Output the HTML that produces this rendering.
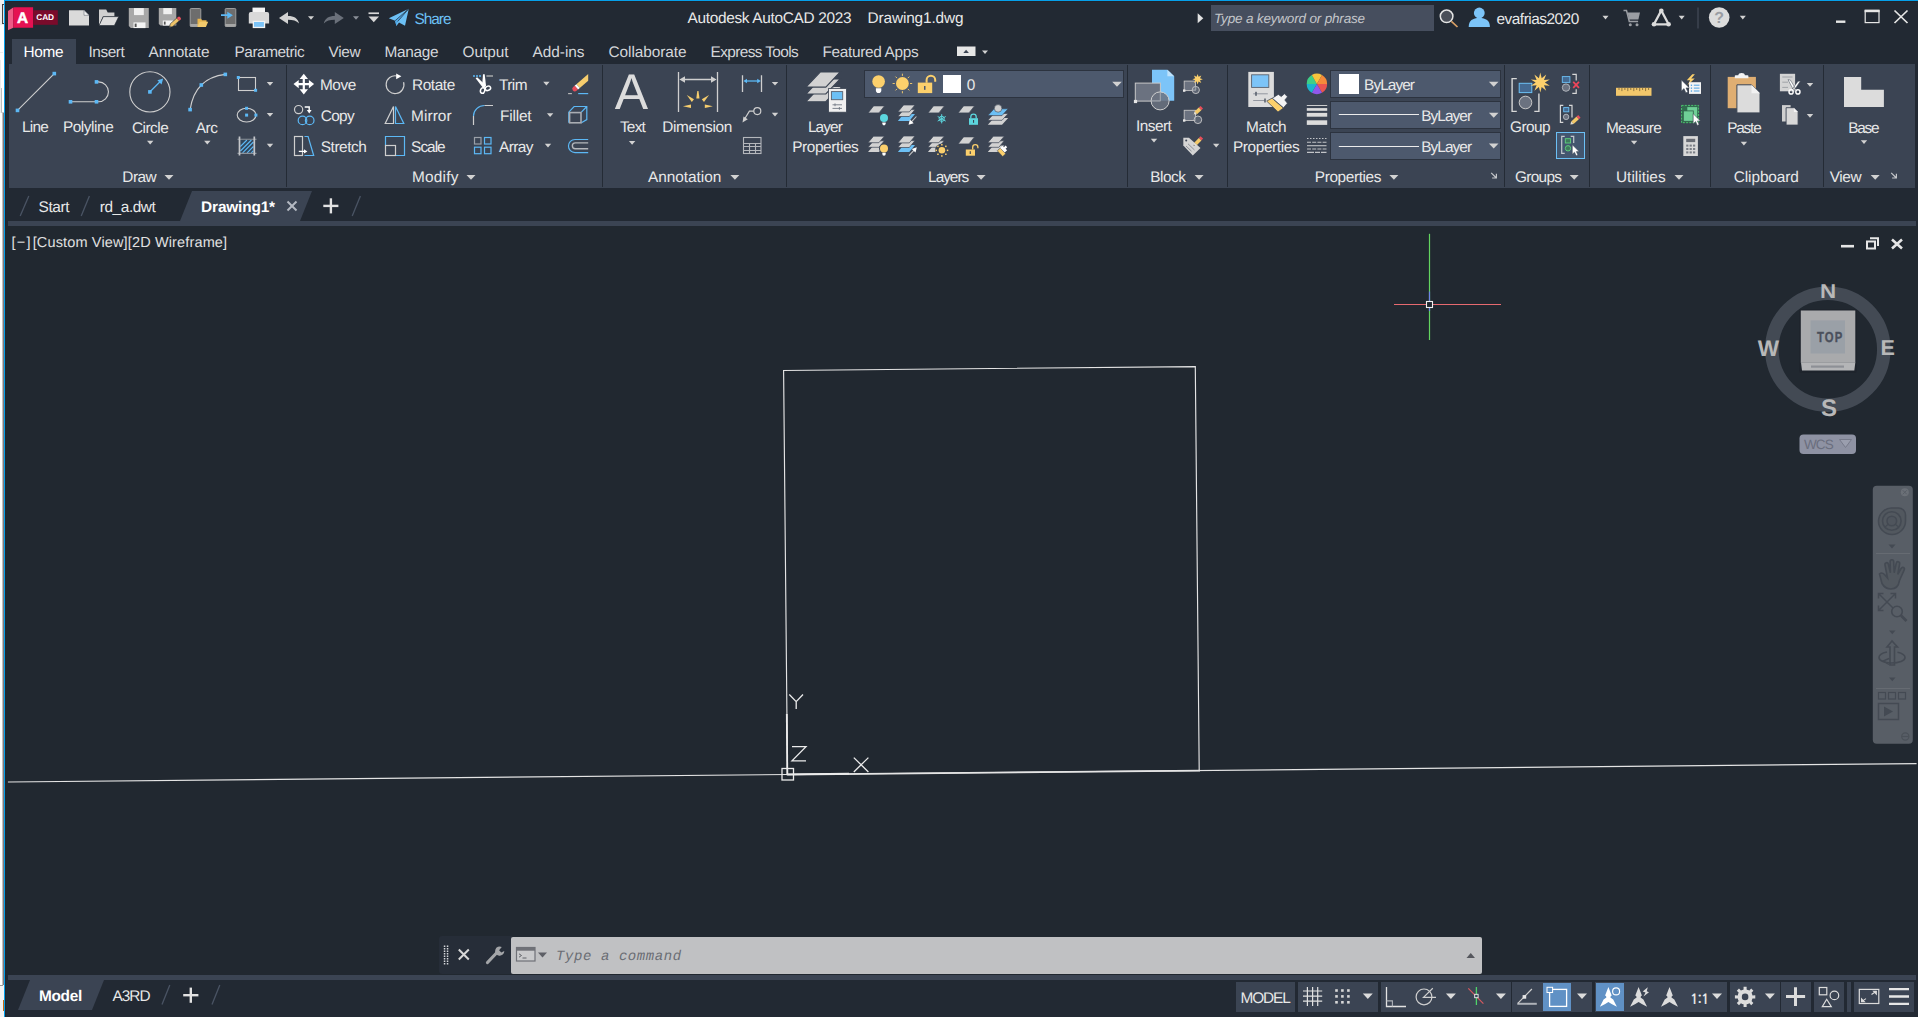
<!DOCTYPE html>
<html lang="en"><head><meta charset="utf-8"><title>Autodesk AutoCAD 2023 - Drawing1.dwg</title>
<style>
html,body{margin:0;padding:0;}
body{width:1918px;height:1017px;overflow:hidden;position:relative;background:#222933;font-family:"Liberation Sans",Arial,sans-serif;text-rendering:geometricPrecision;}
.r{position:absolute;}
.t{position:absolute;white-space:pre;line-height:1;}
svg{position:absolute;left:0;top:0;}
</style></head><body>
<div class="r" style="left:0px;top:0px;width:5px;height:1017px;background:#ffffff;"></div>
<div class="r" style="left:0px;top:0px;width:4px;height:25px;background:#f0f0f0;"></div>
<div class="r" style="left:2px;top:4px;width:2px;height:20px;background:#e2e2e2;border:1px solid #4a4444;border-right:none;box-sizing:border-box;"></div>
<div class="r" style="left:0px;top:52px;width:3px;height:1px;background:#ececec;"></div>
<div class="r" style="left:0px;top:60px;width:1px;height:53px;background:#ececec;"></div>
<div class="r" style="left:1px;top:88px;width:1px;height:25px;background:#bdbdbd;"></div>
<div class="r" style="left:1px;top:112px;width:3px;height:1px;background:#c8c8c8;"></div>
<div class="r" style="left:0px;top:113px;width:4px;height:872px;background:linear-gradient(90deg,#fff 0,#fff 45%,#8d8585 78%,#756d6d 100%);"></div>
<div class="r" style="left:0px;top:985px;width:4px;height:32px;background:#f4f4f4;"></div>
<div class="r" style="left:0px;top:985px;width:3px;height:1px;background:#9a9a9a;"></div>
<div class="r" style="left:3px;top:1000px;width:1px;height:11px;background:#c96a10;"></div>
<div class="r" style="left:4px;top:0px;width:1px;height:1017px;background:#06a0ea;"></div>
<div class="r" style="left:4px;top:0px;width:1914px;height:1px;background:#06a0ea;"></div>
<div class="r" style="left:5px;top:1px;width:1913px;height:1016px;background:#222933;"></div>
<div class="r" style="left:5px;top:1px;width:1913px;height:1px;background:#22242c;"></div>
<div class="r" style="left:5px;top:1px;width:1px;height:1016px;background:#22242c;"></div>
<div class="r" style="left:5px;top:226px;width:1913px;height:749px;background:#212830;"></div>
<div class="r" style="left:12px;top:39px;width:64px;height:26px;background:#3b4453;"></div>
<div class="r" style="left:9px;top:64px;width:1906px;height:124px;background:#3b4453;"></div>
<div class="r" style="left:8px;top:221px;width:1908px;height:5px;background:#3b4453;"></div>
<div class="r" style="left:8px;top:975px;width:1908px;height:5px;background:#3b4453;"></div>
<div class="r" style="left:1211px;top:5px;width:223px;height:26px;background:#464e5e;"></div>
<div class="r" style="left:286px;top:65px;width:1px;height:122px;background:#242b35;"></div>
<div class="r" style="left:602px;top:65px;width:1px;height:122px;background:#242b35;"></div>
<div class="r" style="left:786px;top:65px;width:1px;height:122px;background:#242b35;"></div>
<div class="r" style="left:1127px;top:65px;width:1px;height:122px;background:#242b35;"></div>
<div class="r" style="left:1227px;top:65px;width:1px;height:122px;background:#242b35;"></div>
<div class="r" style="left:1504px;top:65px;width:1px;height:122px;background:#242b35;"></div>
<div class="r" style="left:1589px;top:65px;width:1px;height:122px;background:#242b35;"></div>
<div class="r" style="left:1710px;top:65px;width:1px;height:122px;background:#242b35;"></div>
<div class="r" style="left:1823px;top:65px;width:1px;height:122px;background:#242b35;"></div>
<div class="r" style="left:864px;top:70px;width:260px;height:28px;background:#4d596d;border:1px solid #2c333f;box-sizing:border-box;"></div>
<div class="r" style="left:1330px;top:70px;width:171px;height:28px;background:#4d596d;border:1px solid #2c333f;box-sizing:border-box;"></div>
<div class="r" style="left:1330px;top:101px;width:171px;height:28px;background:#4d596d;border:1px solid #2c333f;box-sizing:border-box;"></div>
<div class="r" style="left:1330px;top:132px;width:171px;height:28px;background:#4d596d;border:1px solid #2c333f;box-sizing:border-box;"></div>
<div class="r" style="left:943px;top:75px;width:18px;height:18px;background:#ffffff;"></div>
<div class="r" style="left:1339px;top:74px;width:20px;height:20px;background:#ffffff;"></div>
<div class="r" style="left:1556px;top:132px;width:29px;height:27px;background:#43566f;border:1px solid #6cc0f5;box-sizing:border-box;"></div>
<div class="r" style="left:1236px;top:982px;width:59px;height:30px;background:#3b4453;"></div>
<div class="r" style="left:1298px;top:982px;width:80px;height:30px;background:#3b4453;"></div>
<div class="r" style="left:1381px;top:982px;width:130px;height:30px;background:#3b4453;"></div>
<div class="r" style="left:1512px;top:982px;width:80px;height:30px;background:#3b4453;"></div>
<div class="r" style="left:1595px;top:982px;width:132px;height:30px;background:#3b4453;"></div>
<div class="r" style="left:1730px;top:982px;width:50px;height:30px;background:#3b4453;"></div>
<div class="r" style="left:1781px;top:982px;width:30px;height:30px;background:#3b4453;"></div>
<div class="r" style="left:1814px;top:982px;width:30px;height:30px;background:#3b4453;"></div>
<div class="r" style="left:1847px;top:982px;width:4px;height:30px;background:#3b4453;"></div>
<div class="r" style="left:1854px;top:982px;width:60px;height:30px;background:#3b4453;"></div>
<div class="r" style="left:1543px;top:983px;width:28px;height:28px;background:#6091c5;"></div>
<div class="r" style="left:1596px;top:983px;width:28px;height:28px;background:#6091c5;"></div>
<div class="r" style="left:439px;top:936px;width:73px;height:38px;background:#262d38;border-radius:3px 0 0 3px;"></div>
<div class="r" style="left:511px;top:937px;width:971px;height:37px;background:#c0c1c3;border-radius:2px;"></div>
<svg width="1918" height="1017" viewBox="0 0 1918 1017">
<!-- ic_canvas -->
<!-- file tabs -->
<polygon points="192,191 312,191 300,221 180,221" fill="#3b4453"/>
<g stroke="#4a5464" stroke-width="1.3" fill="none">
<line x1="20.2" y1="216" x2="28.8" y2="196"/>
<line x1="81.2" y1="216" x2="89.4" y2="196"/>
<line x1="352.2" y1="216" x2="360.4" y2="196"/>
</g>
<g stroke="#b4b9c2" stroke-width="2" fill="none"><line x1="287.5" y1="201.5" x2="296.5" y2="210.5"/><line x1="296.5" y1="201.5" x2="287.5" y2="210.5"/></g>
<g stroke="#e2e2e2" stroke-width="2.4" fill="none"><line x1="323.3" y1="205.9" x2="338.4" y2="205.9"/><line x1="330.9" y1="198.3" x2="330.9" y2="213.4"/></g>

<!-- layout tabs -->
<polygon points="30,980 104,980 92,1010 18,1010" fill="#3b4453"/>
<g stroke="#4a5464" stroke-width="1.3" fill="none">
<line x1="162" y1="1004.5" x2="169.8" y2="985"/>
<line x1="212" y1="1004.5" x2="219.8" y2="985"/>
</g>
<g stroke="#e2e2e2" stroke-width="2.4" fill="none"><line x1="183.2" y1="995.2" x2="198.4" y2="995.2"/><line x1="190.8" y1="987.6" x2="190.8" y2="1002.8"/></g>

<!-- drawing -->
<g stroke="#e4e4e4" stroke-width="1.15" fill="none" stroke-linecap="square">
<line x1="8.5" y1="782" x2="1916" y2="763.6"/>
<polyline points="787.5,774.5 783.6,370.5 1195.3,366.6 1199.2,770.5"/>
<line x1="787.5" y1="774.6" x2="1199.2" y2="770.6" stroke-width="1.6"/>
</g>
<!-- UCS icon -->
<g stroke="#ececec" fill="none" stroke-width="1.3">
<line x1="787.3" y1="774" x2="786.8" y2="714" stroke-width="1.8"/>
<line x1="787.5" y1="774.3" x2="849" y2="773.7" stroke-width="1.8"/>
<rect x="782" y="768.5" width="11.5" height="11.5"/>
<path d="M789.3 694.5 L796.2 701.6 L803 694.5 M796.2 701.6 V709"/>
<path d="M792 746.6 H806 L792 760.8 H806"/>
<path d="M853.8 757.6 L868.4 772 M868.4 757.6 L853.8 772"/>
</g>
<!-- crosshair -->
<g fill="none" stroke-width="1.2">
<line x1="1429.5" y1="233.8" x2="1429.5" y2="340" stroke="#63d45f"/>
<line x1="1429.5" y1="291.5" x2="1429.5" y2="311" stroke="#6e83e6"/>
<line x1="1394" y1="304.5" x2="1501" y2="304.5" stroke="#e66a70"/>
<rect x="1426.5" y="301.5" width="6" height="6" fill="#212830" stroke="#f0f0f0" stroke-width="1.1"/>
</g>
<!-- viewport controls -->
<g fill="none" stroke="#e6e6e6">
<line x1="1841" y1="246.2" x2="1854" y2="246.2" stroke-width="2.6"/>
<rect x="1867" y="241.5" width="8" height="7" stroke-width="2"/>
<path d="M1870 238.2 H1878 V246" stroke-width="2"/>
<path d="M1892 239.5 L1902 248.5 M1902 239.5 L1892 248.5" stroke-width="2.6"/>
</g>
<!-- viewcube -->
<circle cx="1827.8" cy="349.2" r="56" fill="none" stroke="#434a54" stroke-width="13.5"/>
<rect x="1799" y="309" width="58" height="64" rx="3" fill="#1c222a" opacity="0.6"/>
<polygon points="1801,362.6 1855.3,362.6 1854.3,370.5 1802,370.5" fill="#b4b5b7"/>
<rect x="1800.8" y="310.5" width="54.5" height="52.3" fill="#a9aaac"/>
<rect x="1810.6" y="320.4" width="34.4" height="33.1" fill="#9aa0a7"/>
<rect x="1811" y="365.5" width="33" height="2.2" fill="#8d9096"/>
<!-- WCS -->
<rect x="1799.5" y="434.5" width="56.5" height="19.5" rx="4" fill="#8e92a3"/>
<path d="M1839.5 439.5 H1851.5 L1845.5 447.5 Z" fill="#9a9eae" stroke="#767a8a" stroke-width="1"/>
<!-- navigation bar -->
<rect x="1872.8" y="485.7" width="40" height="258" rx="4" fill="#585e66"/>
<g fill="none" stroke="#444a53" stroke-width="1.6">
<circle cx="1904.8" cy="492.3" r="4" stroke="none" fill="#6b7077"/><path d="M1902.8 490.3 l4 4 m0 -4 l-4 4" stroke-width="1" stroke="#585e66"/>
<circle cx="1905.3" cy="736.5" r="3.6" stroke-width="1.2" stroke="#4b5159"/><path d="M1902 736.5 h6.5" stroke-width="1.2" stroke="#4b5159"/>
<line x1="1876" y1="553.5" x2="1910" y2="553.5" stroke-width="1" stroke="#666b72"/>
<line x1="1876" y1="688.5" x2="1910" y2="688.5" stroke-width="1" stroke="#666b72"/>
<!-- steering wheel -->
<path d="M1891.5 508 h7 a7 7 0 0 1 7 7 v6 a13.5 13.5 0 0 1 -27 0 a13.5 13.5 0 0 1 13 -13 z" fill="#52585f"/>
<circle cx="1891.8" cy="521" r="9.3"/><circle cx="1891.8" cy="521" r="4.8" fill="#4f555d"/>
<path d="M1885 527 l3.5 -3 M1898.5 527 l-3.5 -3" stroke-width="1.2"/>
<!-- pan hand -->
<path d="M1879.500 574 c1.500 -1.500 3.500 -1 5 0.500 l3 3.500 l-2.500 -13 c-0.500 -2.600 2.800 -3.300 3.400 -0.700 l2 8.500 l-0.300 -11 c0 -2.700 3.600 -2.700 3.600 0 l0.500 11 l2 -9.500 c0.600 -2.600 3.900 -1.900 3.400 0.700 l-1.800 10.300 l3.300 -5.800 c1.300 -2.300 4.200 -0.700 3 1.600 l-4.600 10.400 c-0.800 5 -3.500 8.500 -8.500 8.500 c-4.500 0 -7 -2 -9 -5.500 z" fill="#52585f"/>
<!-- zoom extents -->
<path d="M1878.500 593.500 l17 17 M1895.500 593.500 l-17 17 M1878.500 598.500 v-5 h5 M1890.500 593.500 h5 v5 M1878.500 605.500 v5 h5" stroke-width="1.5"/>
<circle cx="1897" cy="611.500" r="5.300" fill="#585e66"/>
<line x1="1901" y1="615.500" x2="1906.500" y2="621" stroke-width="2.6"/>
<!-- orbit -->
<path d="M1892 641 l-5 6 h3 v18 h4.500 v-18 h3 z"/>
<path d="M1887 652 c-5 1 -8 3 -8 5.500 c0 3.500 6 5.500 12.500 5.500 c7.500 0 13.500 -2.300 13.500 -5.500 c0 -2.300 -3 -4.300 -7.500 -5.300"/>
<path d="M1889 658.500 l-6 2.500 l6 3.500" stroke-width="1.4"/>
<!-- showmotion -->
<rect x="1878.500" y="692.500" width="7" height="6.500" stroke-width="1.2"/><rect x="1888.500" y="692.500" width="7" height="6.500" stroke-width="1.2"/><rect x="1898.500" y="692.500" width="7" height="6.500" stroke-width="1.2"/>
<rect x="1878.500" y="703.500" width="20" height="16" stroke-width="1.5"/>
</g>
<g fill="#444a53">
<path d="M1888.500 544.500 h7 l-3.500 4 z"/><path d="M1889 630.500 h6.500 l-3.250 3.800 z"/><path d="M1889 677.500 h6.500 l-3.250 3.800 z"/>
<path d="M1884 706.500 v10 l9 -5 z"/>
</g>
<!-- command line icons -->
<g fill="#d4d6da">
<rect x="443.800" y="945.500" width="1.500" height="1.500"/><rect x="446.800" y="945.500" width="1.500" height="1.500"/>
<rect x="443.800" y="948" width="1.500" height="1.500"/><rect x="446.800" y="948" width="1.500" height="1.500"/>
<rect x="443.800" y="950.500" width="1.500" height="1.500"/><rect x="446.800" y="950.500" width="1.500" height="1.500"/>
<rect x="443.800" y="953" width="1.500" height="1.500"/><rect x="446.800" y="953" width="1.500" height="1.500"/>
<rect x="443.800" y="955.500" width="1.500" height="1.500"/><rect x="446.800" y="955.500" width="1.500" height="1.500"/>
<rect x="443.800" y="958" width="1.500" height="1.500"/><rect x="446.800" y="958" width="1.500" height="1.500"/>
<rect x="443.800" y="960.500" width="1.500" height="1.500"/><rect x="446.800" y="960.500" width="1.500" height="1.500"/>
<rect x="443.800" y="963" width="1.500" height="1.500"/><rect x="446.800" y="963" width="1.500" height="1.500"/>
</g>
<path d="M458.800 949.500 l10 10 m0 -10 l-10 10" stroke="#d8d8d8" stroke-width="2" fill="none"/>
<path d="M487.500 962.500 l9 -9.500" stroke="#a3a5a8" stroke-width="3.200" stroke-linecap="round" fill="none"/>
<path d="M501.800 947 a4.600 4.600 0 1 0 2.500 4 l-3 1.500 l-2.200 -2.200 z" fill="#a3a5a8"/>
<rect x="516.500" y="947.500" width="18.500" height="13.500" fill="#c9cacc" stroke="#6f7177" stroke-width="1.200"/>
<rect x="516.500" y="947.500" width="18.500" height="3.200" fill="#6f7177"/>
<path d="M519 953.800 l2.500 1.700 l-2.500 1.700 M522.500 958 h4" stroke="#55575d" stroke-width="0.900" fill="none"/>
<path d="M538 952.500 h9 l-4.500 5 z" fill="#5d5f66"/>
<path d="M1466.500 958 h8.500 l-4.250 -5 z" fill="#55575d"/>
<!-- ic_title -->
<!-- logo -->
<polygon points="8,11 13.2,7.600 13.2,27.800 8,30.300" fill="#ee5a86"/>
<path d="M13.2 8.200 q0 -1 1 -1 h18.900 v20.600 h-19.900 z" fill="#e51152"/>
<rect x="33.100" y="10.200" width="24.700" height="14.600" fill="#7a0b2b"/>
<!-- new -->
<path d="M69 10.300 h15 l5 5 v10.300 h-20 z" fill="#dadada"/>
<path d="M84 10.300 v5 h5 z" fill="#f4f4f4" stroke="#6a6f78" stroke-width="0.600"/>
<!-- open -->
<path d="M99 9.400 h7.200 l1.500 3.100 h6.700 v4 h-11.500 l-3.900 9 z" fill="#d0d0d0"/>
<path d="M103.300 16.600 h15.500 l-4.400 9 h-15.400 z" fill="#dcdcdc" stroke="#222933" stroke-width="0.700"/>
<!-- save -->
<path d="M128.800 8.100 h20 v20 h-18 l-2 -2 z" fill="#a8a8a8"/>
<rect x="134" y="8.100" width="9.800" height="7" fill="#f0f0f0"/>
<rect x="133.500" y="22.400" width="12" height="5.700" fill="#f4f4f4"/>
<rect x="134.700" y="23.600" width="1.900" height="3.400" fill="#555"/>
<!-- save as -->
<path d="M158.800 8.100 h17.500 v17.500 h-15.800 l-1.700 -1.700 z" fill="#a8a8a8"/>
<rect x="163.300" y="8.100" width="8.600" height="6.100" fill="#f0f0f0"/>
<rect x="162.800" y="20.500" width="10.500" height="5.100" fill="#f4f4f4"/>
<rect x="163.900" y="21.600" width="1.700" height="3" fill="#555"/>
<path d="M169.300 27.600 l1 -3.800 l6.500 -5.800 l2.500 2.700 l-6.500 5.800 z" fill="#f0c56a" stroke="#222933" stroke-width="0.600"/>
<path d="M176.800 18 l1.300 -1.100 q1 -0.800 1.900 0.200 l0.700 0.800 q0.800 1 -0.200 1.800 l-1.200 1 z" fill="#e9525e"/>
<path d="M169.300 27.600 l0.500 -1.900 l1.400 1.400 z" fill="#555"/>
<!-- open from web/mobile -->
<rect x="190.200" y="8.500" width="10.600" height="18" rx="1" fill="#6d6d6d" stroke="#a6a6a6" stroke-width="0.900"/>
<rect x="190.200" y="24" width="10.600" height="2.500" fill="#a6a6a6"/>
<path d="M197.500 18.800 h3.600 l0.900 1.500 h4.500 v1.700 h-7 l-2 4.900 z" fill="#e9b64f"/>
<path d="M199.400 21.700 h8.800 l-2.300 5.200 h-8.400 z" fill="#f3ca6c"/>
<!-- save to web/mobile -->
<rect x="225.200" y="8.500" width="10.600" height="18" rx="1" fill="#6d6d6d" stroke="#a6a6a6" stroke-width="0.900"/>
<rect x="225.200" y="24" width="10.600" height="2.500" fill="#a6a6a6"/>
<path d="M221 14.300 h6.300 v-2.600 l5.600 3.500 l-5.600 3.500 v-2.600 h-6.300 z" fill="#5cb8f5"/>
<!-- print -->
<rect x="252.500" y="7.600" width="12.500" height="6" fill="#f4f4f4"/>
<path d="M250.800 12 h16.300 q2 0 2 2 v9.600 h-20.300 v-9.600 q0 -2 2 -2 z" fill="#d9d9d9"/>
<rect x="252.700" y="20.800" width="12.500" height="7.300" fill="#f4f4f4"/>
<rect x="254" y="22" width="9.900" height="4.800" fill="#7cc4f8"/>
<!-- undo -->
<path d="M279 17.900 l9 -6 v4.200 c6 0 10 2.500 11 7.400 c-2.500 -3 -6 -3.800 -11 -3.800 v4.200 z" fill="#d2d2d2"/>
<path d="M308 16.200 h6 l-3 3.600 z" fill="#d2d2d2"/>
<!-- redo -->
<path d="M343.800 17.900 l-9 -6 v4.200 c-6 0 -10 2.500 -11 7.400 c2.500 -3 6 -3.800 11 -3.800 v4.200 z" fill="#6a707a"/>
<path d="M353 16.200 h6 l-3 3.600 z" fill="#8a8f98"/>
<!-- customize -->
<rect x="368.500" y="12.400" width="10.500" height="1.700" fill="#d8d8d8"/>
<path d="M368.500 16.600 h10.500 l-5.250 5.600 z" fill="#d8d8d8"/>
<!-- share -->
<path d="M388.800 18.200 l20 -9.500 l-3.800 17 l-6 -3.300 l-2.600 3.600 l-1.300 -5.300 z" fill="#6cc0f5"/>
<path d="M408.800 8.700 l-13.700 12 l1.300 5.300 l1.300 -4.500 z" fill="#4ea6e6"/>
<path d="M408.800 8.700 l-13.700 12" stroke="#222933" stroke-width="0.700" fill="none"/>
<path d="M408.800 8.700 l-11.100 12.800" stroke="#222933" stroke-width="0.700" fill="none"/>

<!-- right side -->
<path d="M1197.700 13.300 v9.900 l5.600 -4.950 z" fill="#e2e2e2"/>
<circle cx="1446.600" cy="16.300" r="6.300" fill="#4a4f59" stroke="#e4e4e4" stroke-width="1.500"/>
<line x1="1451.400" y1="21.300" x2="1457.500" y2="27" stroke="#d9a066" stroke-width="1.700"/>
<circle cx="1479.300" cy="13" r="5.400" fill="#7cc4f8"/>
<path d="M1468.700 27 c0 -6.500 4 -9 10.600 -9 s10.600 2.500 10.600 9 z" fill="#7cc4f8"/>
<path d="M1602.500 15.800 h6 l-3 3.600 z" fill="#d2d2d2"/>
<!-- cart -->
<g fill="none" stroke="#9a9da3" stroke-width="1.500"><path d="M1623.500 10.500 h3 l2.800 11 h8.800"/></g>
<path d="M1627.500 12.500 h12.500 l-1.600 7 h-9.200 z" fill="#9a9da3"/>
<circle cx="1630.300" cy="24.700" r="1.500" fill="#9a9da3"/><circle cx="1637" cy="24.700" r="1.500" fill="#9a9da3"/>
<!-- autodesk app -->
<path d="M1661.300 10.500 l-7.300 13.800 h14.600 z" fill="none" stroke="#dcdcdc" stroke-width="2.300" stroke-linejoin="round"/>
<circle cx="1661.300" cy="10.800" r="2.300" fill="#dcdcdc"/><circle cx="1654" cy="24.300" r="2.300" fill="#dcdcdc"/><circle cx="1668.600" cy="24.300" r="2.300" fill="#dcdcdc"/>
<path d="M1678.700 15.800 h6 l-3 3.600 z" fill="#d2d2d2"/>
<rect x="1697.500" y="7.500" width="1" height="21" fill="#4a5260"/>
<circle cx="1719.200" cy="17.500" r="10.300" fill="#dcdcdc"/>
<path d="M1739.800 15.800 h6 l-3 3.600 z" fill="#d2d2d2"/>
<!-- window buttons -->
<rect x="1836" y="20.500" width="9.400" height="2.400" fill="#e6e6e6"/>
<rect x="1865.200" y="10.800" width="13.800" height="11.800" fill="none" stroke="#e6e6e6" stroke-width="1.200"/>
<rect x="1864.600" y="9.600" width="15" height="2.600" fill="#e6e6e6"/>
<path d="M1894.500 10.500 l13 12.500 m0 -12.500 l-13 12.500" stroke="#e6e6e6" stroke-width="1.700" fill="none"/>
<!-- ribbon minimize button -->
<rect x="957" y="46.500" width="18.500" height="9.500" fill="#e6e6e6"/>
<path d="M963.300 53 h5.600 l-2.800 -3.300 z" fill="#3b4453"/>
<path d="M982 50.500 h6 l-3 3.400 z" fill="#d2d2d2"/>
<!-- ic_ribbon1 -->
<path d="M266.8 82.0 h6.4 l-3.20 3.7 z" fill="#d2d2d2"/>
<path d="M266.8 113.0 h6.4 l-3.20 3.7 z" fill="#d2d2d2"/>
<path d="M266.8 143.8 h6.4 l-3.20 3.7 z" fill="#d2d2d2"/>
<path d="M147.0 140.8 h6.4 l-3.20 3.7 z" fill="#d2d2d2"/>
<path d="M204.1 140.8 h6.4 l-3.20 3.7 z" fill="#d2d2d2"/>
<path d="M543.2 81.8 h6.4 l-3.20 3.7 z" fill="#d2d2d2"/>
<path d="M546.9 113.2 h6.4 l-3.20 3.7 z" fill="#d2d2d2"/>
<path d="M544.8 143.7 h6.4 l-3.20 3.7 z" fill="#d2d2d2"/>
<path d="M628.9 141.0 h6.4 l-3.20 3.7 z" fill="#d2d2d2"/>
<path d="M771.8 81.9 h6.4 l-3.20 3.7 z" fill="#d2d2d2"/>
<path d="M771.8 112.8 h6.4 l-3.20 3.7 z" fill="#d2d2d2"/>
<path d="M1150.8 138.7 h6.4 l-3.20 3.7 z" fill="#d2d2d2"/>
<path d="M1213.0 143.8 h6.4 l-3.20 3.7 z" fill="#d2d2d2"/>
<path d="M1630.9 140.7 h6.4 l-3.20 3.7 z" fill="#d2d2d2"/>
<path d="M1740.7 141.8 h6.4 l-3.20 3.7 z" fill="#d2d2d2"/>
<path d="M1806.8 83.0 h6.4 l-3.20 3.7 z" fill="#d2d2d2"/>
<path d="M1806.8 114.0 h6.4 l-3.20 3.7 z" fill="#d2d2d2"/>
<path d="M1860.8 140.2 h6.4 l-3.20 3.7 z" fill="#d2d2d2"/>
<path d="M164.5 175.0 h9.0 l-4.50 4.8 z" fill="#d2d2d2"/>
<path d="M466.5 175.0 h9.0 l-4.50 4.8 z" fill="#d2d2d2"/>
<path d="M730.4 175.0 h9.0 l-4.50 4.8 z" fill="#d2d2d2"/>
<path d="M976.6 175.0 h9.0 l-4.50 4.8 z" fill="#d2d2d2"/>
<path d="M1194.6 175.0 h9.0 l-4.50 4.8 z" fill="#d2d2d2"/>
<path d="M1389.4 175.0 h9.0 l-4.50 4.8 z" fill="#d2d2d2"/>
<path d="M1569.7 175.0 h9.0 l-4.50 4.8 z" fill="#d2d2d2"/>
<path d="M1674.5 175.0 h9.0 l-4.50 4.8 z" fill="#d2d2d2"/>
<path d="M1870.7 175.0 h9.0 l-4.50 4.8 z" fill="#d2d2d2"/>
<path d="M1112.2 81.8 h9.6 l-4.80 5.0 z" fill="#d2d2d2"/>
<path d="M1488.9 81.8 h9.6 l-4.80 5.0 z" fill="#d2d2d2"/>
<path d="M1488.9 112.7 h9.6 l-4.80 5.0 z" fill="#d2d2d2"/>
<path d="M1488.9 143.6 h9.6 l-4.80 5.0 z" fill="#d2d2d2"/>
<path d="M1491.2 172.8 l5.2 5.2 m0 -4.3 v4.3 h-4.3" stroke="#c4c6ca" stroke-width="1.2" fill="none"/>
<path d="M1891.2 172.8 l5.2 5.2 m0 -4.3 v4.3 h-4.3" stroke="#c4c6ca" stroke-width="1.2" fill="none"/>
<g fill="none" stroke="#cfcfcf" stroke-width="1.100">
<line x1="17.5" y1="110.4" x2="54.3" y2="73.6"/>
<path d="M70.5 101.8 H98.500 a9.950 9.950 0 0 0 0 -19.900 H96.500"/>
<circle cx="149.9" cy="91.9" r="20.1"/>
<path d="M190.1 109.6 Q194.900 78 225.3 74.4"/>
<rect x="238.500" y="77.500" width="17" height="13"/>
<ellipse cx="246.600" cy="115.100" rx="9.400" ry="6.900"/>
</g>
<path d="M150.5 91.3 L160.5 81.3" stroke="#5cb8f5" stroke-width="1.3" fill="none"/>
<path d="M163.200 78.600 l-5.800 1.700 l4.100 4.100 z" fill="#5cb8f5"/>
<rect x="15.7" y="108.6" width="3.6" height="3.6" fill="#5cb8f5"/>
<rect x="52.5" y="71.8" width="3.6" height="3.6" fill="#5cb8f5"/>
<rect x="68.7" y="100.0" width="3.6" height="3.6" fill="#5cb8f5"/>
<rect x="94.7" y="100.0" width="3.6" height="3.6" fill="#5cb8f5"/>
<rect x="94.7" y="80.1" width="3.6" height="3.6" fill="#5cb8f5"/>
<rect x="148.1" y="90.1" width="3.6" height="3.6" fill="#5cb8f5"/>
<rect x="188.3" y="107.8" width="3.6" height="3.6" fill="#5cb8f5"/>
<rect x="199.5" y="83.2" width="3.6" height="3.6" fill="#5cb8f5"/>
<rect x="223.5" y="72.6" width="3.6" height="3.6" fill="#5cb8f5"/>
<rect x="236.8" y="76.0" width="3.0" height="3.0" fill="#5cb8f5"/>
<rect x="254.1" y="88.8" width="3.0" height="3.0" fill="#5cb8f5"/>
<rect x="245.1" y="106.8" width="3.0" height="3.0" fill="#5cb8f5"/>
<rect x="245.1" y="113.6" width="3.0" height="3.0" fill="#5cb8f5"/>
<rect x="254.4" y="113.6" width="3.0" height="3.0" fill="#5cb8f5"/>
<rect x="240.300" y="140" width="13.200" height="12.800" fill="#31465c"/>
<path d="M240.400 146.500 l6.500 -6.500 M240.400 151 l11 -11 M242.600 152.800 l10.800 -10.800 M247.100 152.800 l6.300 -6.300 M251.300 152.800 l2.100 -2.100" stroke="#5cb8f5" stroke-width="1.100" fill="none"/>
<g fill="none"><path d="M237.500 139.200 H256.500 M237.500 153.400 H256.500" stroke="#8c929b" stroke-width="1.100"/><path d="M239.500 136.600 V155.600 M254.300 136.600 V155.600" stroke="#c4c6ca" stroke-width="1.700"/></g>
<g fill="#ffffff"><path d="M303.800 73.800 l4.200 5.200 h-3.100 v4 h4 v-3.100 l5.200 4.200 l-5.200 4.200 v-3.100 h-4 v4 h3.100 l-4.200 5.200 l-4.200 -5.200 h3.100 v-4 h-4 v3.100 l-5.200 -4.200 l5.200 -4.200 v3.100 h4 v-4 h-3.100 z"/></g>
<circle cx="298.600" cy="109.600" r="4.100" fill="none" stroke="#cfcfcf" stroke-width="1.200"/>
<path d="M304.700 107 h4.500 v3.500" fill="none" stroke="#ffffff" stroke-width="1.400"/><path d="M306.800 110 h4.800 l-2.400 3.600 z" fill="#ffffff"/>
<g fill="none" stroke="#5cb8f5" stroke-width="1.200"><circle cx="302.500" cy="120.400" r="4.300"/><circle cx="309.700" cy="120.400" r="4.300"/></g>
<rect x="294.500" y="136.500" width="8" height="19" fill="none" stroke="#cfcfcf" stroke-width="1.200"/>
<path d="M304.500 136.500 h3.600 l5.600 19 h-9.200" fill="none" stroke="#5cb8f5" stroke-width="1.200"/>
<path d="M298.800 151.400 h5.500" stroke="#ffffff" stroke-width="1.300" fill="none"/><path d="M304 149.200 l3.400 2.200 l-3.400 2.200 z" fill="#ffffff"/>
<path d="M397 76 A8.900 8.900 0 1 0 403.600 82.200" fill="none" stroke="#cfcfcf" stroke-width="1.200"/>
<path d="M396.200 73.500 l5.200 2.700 l-5.200 3 z" fill="#ffffff"/>
<path d="M393.500 106.400 V123.500 H385.200 z" fill="none" stroke="#cfcfcf" stroke-width="1.200"/>
<path d="M395.500 106.400 V123.500 H403.800 z" fill="none" stroke="#5cb8f5" stroke-width="1.200"/>
<path d="M385.500 145.500 V136.500 H404.500 V155.500 H395.500" fill="none" stroke="#5cb8f5" stroke-width="1.200"/>
<rect x="385.500" y="145.500" width="10" height="10" fill="none" stroke="#cfcfcf" stroke-width="1.200"/>
<path d="M473 76 H482" stroke="#5cb8f5" stroke-width="1.300" stroke-dasharray="2 1" fill="none"/>
<path d="M486.400 76 H493" stroke="#b8b8b8" stroke-width="1.300" fill="none"/>
<path d="M483 74.200 h1.700 l1.300 11.400 l-2.400 1.600 l-1.400 -2 z" fill="#ffffff"/><path d="M475.600 78.200 l1.500 -0.900 l8.900 8.300 l-1.700 2.600 l-2.300 -1.600 z" fill="#ffffff"/>
<g fill="none" stroke="#ffffff" stroke-width="1.500"><ellipse cx="482.600" cy="90.500" rx="2.100" ry="2.800" transform="rotate(18 482.600 90.500)"/><ellipse cx="487.900" cy="88.300" rx="2.800" ry="2.100" transform="rotate(-22 487.900 88.300)"/></g>
<path d="M473.500 116 A11.100 10.500 0 0 1 484.600 105.500" fill="none" stroke="#5cb8f5" stroke-width="1.200"/>
<path d="M473.500 116 V125 M484.600 105.500 H493" fill="none" stroke="#cfcfcf" stroke-width="1.200"/>
<rect x="474.500" y="137.500" width="6.500" height="6.500" fill="none" stroke="#9aa0a8" stroke-width="1.200"/>
<g fill="none" stroke="#5cb8f5" stroke-width="1.200"><rect x="484.500" y="137.500" width="6.500" height="6.500"/><rect x="474.500" y="147.200" width="6.500" height="6.500"/><rect x="484.500" y="147.200" width="6.500" height="6.500"/></g>
<path d="M588.200 73.900 V80.800 L579.800 87.900 L576.400 84.300 z" fill="#f6cd6d"/>
<path d="M576.400 84.300 L579.800 87.900 L578 89.400 L574.600 85.800 z" fill="#ffffff"/>
<path d="M574.600 85.800 L578 89.400 L576.500 90.700 q-2 1.500 -3.600 -0.300 q-1.600 -1.800 0.200 -3.300 z" fill="#e94d5a"/>
<path d="M568.100 93.600 H571.900" stroke="#b8b8b8" stroke-width="1.200"/><path d="M578.200 93.600 H588.200" stroke="#5cb8f5" stroke-width="1.200"/>
<path d="M568.800 112.100 L574.100 106.500 H586.800 V119.600 L581.400 122.800 M586.800 106.500 L581.400 112.100 M568.800 112.100 V122.800" fill="none" stroke="#5cb8f5" stroke-width="1.200"/>
<rect x="569.600" y="112.600" width="11.400" height="10.200" fill="none" stroke="#a9adb3" stroke-width="1.600"/>
<path d="M588.200 139.500 H575 a6.550 6.550 0 0 0 0 13.100 H588.200" fill="none" stroke="#5cb8f5" stroke-width="1.200"/>
<path d="M588.200 142.900 H575.300 a2.950 2.950 0 0 0 0 5.900 H588.200" fill="none" stroke="#b4b7bc" stroke-width="1.400"/>
<g fill="none" stroke="#cfcfcf" stroke-width="1.300"><path d="M678.500 72 V112 M717.500 72 V112 M683 79.500 H713"/></g>
<path d="M679.400 79.500 l5.600 -3.200 v6.400 z M716.600 79.500 l-5.600 -3.200 v6.400 z" fill="#cfcfcf"/>
<g fill="#f6cd6d"><path d="M697.300 91 h1.200 l1 7.400 h-3.200 z"/><path d="M686.800 95 l7.200 4.300 l-2.200 2.600 z"/><path d="M709 95 l-7.200 4.300 l2.200 2.600 z"/><path d="M682.900 106.200 l8.100 -1.700 v3.400 z"/><path d="M712.900 106.200 l-8.100 -1.700 v3.400 z"/></g>
<g fill="none" stroke="#cfcfcf" stroke-width="1.300"><path d="M742.500 75.200 V92.100 M761.500 75.200 V92.100"/></g>
<path d="M746 81 H758" stroke="#5cb8f5" stroke-width="1.300"/><path d="M743.400 81 l3.600 -2.200 v4.400 z M760.800 81 l-3.600 -2.200 v4.400 z" fill="#5cb8f5"/>
<g fill="none" stroke="#cfcfcf" stroke-width="1.200"><circle cx="757.300" cy="111.100" r="3.500"/><path d="M753.800 111.200 H749.400 L744.600 119"/></g>
<path d="M742.500 122.400 l1 -5.800 l4.300 2.700 z" fill="#cfcfcf"/>
<g fill="none" stroke="#b4b7bc" stroke-width="1.100"><rect x="743.500" y="137.500" width="17.500" height="16"/><path d="M743.500 143.500 H761 M743.500 146.500 H761 M743.500 150.500 H761 M749.500 143.500 V153.500 M755.500 143.500 V153.500"/></g>
<!-- ic_ribbon2 -->
<path d="M806 101.7 l14.200 -15.100 h20 l-14.400 15.100 z" fill="#d2d2d2" stroke="#3b4453" stroke-width="1.100"/>
<path d="M806 94.0 l14.200 -15.100 h20 l-14.400 15.100 z" fill="#d2d2d2" stroke="#3b4453" stroke-width="1.100"/>
<path d="M806 87.1 l14.200 -15.100 h20 l-14.400 15.100 z" fill="#d2d2d2" stroke="#3b4453" stroke-width="1.100"/>
<rect x="833.900" y="87.200" width="6.300" height="3" fill="#e6e6e6"/>
<rect x="828.600" y="88.600" width="17.800" height="23.600" fill="#f0f0f0" stroke="#3b4453" stroke-width="0.800"/>
<rect x="831.400" y="91.600" width="11.300" height="8.100" fill="#6cc0f5" stroke="#59616e" stroke-width="0.900"/>
<path d="M832.500 104.800 H842 M832.500 108.400 H842 M835 103.400 v2.800 M839.400 107 v2.800" stroke="#6f7782" stroke-width="0.900" fill="none"/>
<circle cx="878.6" cy="81.5" r="6.3" fill="#fcd06c"/><path d="M875.9 88.3 h5.4 v1.9 q0 2.8 -2.7 2.8 q-2.7 0 -2.7 -2.8 z" fill="#ffffff"/>
<circle cx="902.400" cy="83.500" r="6.400" fill="#fcd06c"/>
<g stroke="#fcd06c" stroke-width="0.900">
<line x1="910.0" y1="83.5" x2="912.2" y2="83.5"/>
<line x1="907.8" y1="88.9" x2="909.3" y2="90.4"/>
<line x1="902.4" y1="91.1" x2="902.4" y2="93.3"/>
<line x1="897.0" y1="88.9" x2="895.5" y2="90.4"/>
<line x1="894.8" y1="83.5" x2="892.6" y2="83.5"/>
<line x1="897.0" y1="78.1" x2="895.5" y2="76.6"/>
<line x1="902.4" y1="75.9" x2="902.4" y2="73.7"/>
<line x1="907.8" y1="78.1" x2="909.3" y2="76.6"/>
</g>
<rect x="917.800" y="82.600" width="14.400" height="10.500" fill="#fcd06c"/>
<path d="M926.600 82.800 V80 a4.300 4.300 0 0 1 8.600 0 V81.800" fill="none" stroke="#fcd06c" stroke-width="2"/>
<rect x="924" y="86" width="1.500" height="3.800" fill="#4d596d"/>
<path d="M873.6 105.9 h10.9 l-5.5 7.0 h-10.9 z" fill="#d2d2d2" stroke="#3b4453" stroke-width="0.700"/>
<circle cx="884.0" cy="118.1" r="4.0" fill="#5cd6de"/><path d="M882.3 122.4 h3.4 v1.2 q0 1.8 -1.7 1.8 q-1.7 0 -1.7 -1.8 z" fill="#ffffff"/>
<path d="M903.6 114.1 h11.4 l-5.7 6.9 h-11.4 z" fill="#6cc0f5"/>
<path d="M903.6 109.6 h11.4 l-5.7 6.9 h-11.4 z" fill="#d2d2d2" stroke="#3b4453" stroke-width="0.700"/>
<path d="M903.6 105.0 h11.4 l-5.7 6.9 h-11.4 z" fill="#d2d2d2" stroke="#3b4453" stroke-width="0.700"/>
<path d="M916.400 116.500 L911 122.400" stroke="#c4c4c4" stroke-width="1.100" fill="none"/><path d="M908.600 124.800 l1.300 -5.200 l3.800 3.600 z" fill="#ffffff"/>
<path d="M933.5 105.9 h10.9 l-5.5 7.0 h-10.9 z" fill="#d2d2d2" stroke="#3b4453" stroke-width="0.700"/>
<g stroke="#5cd6de" stroke-width="1" fill="none">
<line x1="941.7" y1="114.2" x2="941.7" y2="123.4"/>
<line x1="945.7" y1="116.5" x2="937.7" y2="121.1"/>
<line x1="945.7" y1="121.1" x2="937.7" y2="116.5"/>
<circle cx="941.700" cy="118.800" r="2.600"/></g>
<path d="M963.6 105.9 h10.9 l-5.5 7.0 h-10.9 z" fill="#d2d2d2" stroke="#3b4453" stroke-width="0.700"/>
<rect x="969" y="118.200" width="9" height="6.600" fill="#5cd6de"/>
<path d="M970.800 118.400 v-1.600 a2.700 2.700 0 0 1 5.400 0 v1.600" fill="none" stroke="#5cd6de" stroke-width="1.300"/>
<rect x="973" y="120" width="1.100" height="2.800" fill="#3b4453"/>
<path d="M994.0 118.0 h14.2 l-6.2 6.8 h-14.2 z" fill="#d2d2d2"/>
<path d="M994.0 113.5 h14.2 l-6.2 6.8 h-14.2 z" fill="#d2d2d2" stroke="#3b4453" stroke-width="0.700"/>
<path d="M994.0 108.8 h14.2 l-6.2 6.8 h-14.2 z" fill="#6cc0f5" stroke="#3b4453" stroke-width="0.700"/>
<circle cx="998.100" cy="108.400" r="3.800" fill="#cfcfcf" stroke="#3b4453" stroke-width="0.600"/>
<path d="M873.5 145.5 h10.9 l-5.5 6.5 h-10.9 z" fill="#d2d2d2"/>
<path d="M873.5 140.8 h10.9 l-5.5 6.5 h-10.9 z" fill="#d2d2d2" stroke="#3b4453" stroke-width="0.700"/>
<path d="M873.5 136.2 h10.9 l-5.5 6.5 h-10.9 z" fill="#d2d2d2" stroke="#3b4453" stroke-width="0.700"/>
<circle cx="884" cy="148.500" r="5" fill="#3b4453"/>
<circle cx="884.0" cy="148.5" r="4.0" fill="#fcd06c"/><path d="M882.3 152.8 h3.4 v1.2 q0 1.8 -1.7 1.8 q-1.7 0 -1.7 -1.8 z" fill="#ffffff"/>
<path d="M903.6 145.1 h11.4 l-5.7 6.9 h-11.4 z" fill="#6cc0f5"/>
<path d="M903.6 140.6 h11.4 l-5.7 6.9 h-11.4 z" fill="#d2d2d2" stroke="#3b4453" stroke-width="0.700"/>
<path d="M903.6 136.0 h11.4 l-5.7 6.9 h-11.4 z" fill="#d2d2d2" stroke="#3b4453" stroke-width="0.700"/>
<path d="M909 155.700 L914.400 149.800" stroke="#c4c4c4" stroke-width="1.100" fill="none"/><path d="M916.800 147.300 l-1.300 5.200 l-3.800 -3.600 z" fill="#ffffff"/>
<path d="M933.4 145.5 h10.9 l-5.5 6.5 h-10.9 z" fill="#d2d2d2"/>
<path d="M933.4 140.8 h10.9 l-5.5 6.5 h-10.9 z" fill="#d2d2d2" stroke="#3b4453" stroke-width="0.700"/>
<path d="M933.4 136.2 h10.9 l-5.5 6.5 h-10.9 z" fill="#d2d2d2" stroke="#3b4453" stroke-width="0.700"/>
<circle cx="941.900" cy="150.300" r="6.800" fill="#3b4453"/>
<circle cx="941.900" cy="150.300" r="3.300" fill="#fcd06c"/>
<rect x="946.8" y="149.6" width="1.500" height="1.500" fill="#fcd06c"/>
<rect x="945.1" y="153.5" width="1.500" height="1.500" fill="#fcd06c"/>
<rect x="941.1" y="155.2" width="1.500" height="1.500" fill="#fcd06c"/>
<rect x="937.2" y="153.5" width="1.500" height="1.500" fill="#fcd06c"/>
<rect x="935.5" y="149.6" width="1.500" height="1.500" fill="#fcd06c"/>
<rect x="937.2" y="145.6" width="1.500" height="1.500" fill="#fcd06c"/>
<rect x="941.1" y="144.0" width="1.500" height="1.500" fill="#fcd06c"/>
<rect x="945.1" y="145.6" width="1.500" height="1.500" fill="#fcd06c"/>
<path d="M963.6 136.9 h10.9 l-5.5 7.0 h-10.9 z" fill="#d2d2d2" stroke="#3b4453" stroke-width="0.700"/>
<rect x="965.800" y="149.500" width="9.200" height="6.200" fill="#fcd06c"/>
<path d="M972.700 149.600 v-2.400 a2.600 2.600 0 0 1 5.200 0 v1" fill="none" stroke="#fcd06c" stroke-width="1.300"/>
<rect x="969.700" y="151.200" width="1.100" height="2.800" fill="#3b4453"/>
<path d="M993.3 145.5 h11.0 l-5.5 6.5 h-11.0 z" fill="#d2d2d2"/>
<path d="M993.3 140.8 h11.0 l-5.5 6.5 h-11.0 z" fill="#d2d2d2" stroke="#3b4453" stroke-width="0.700"/>
<path d="M993.3 136.2 h11.0 l-5.5 6.5 h-11.0 z" fill="#d2d2d2" stroke="#3b4453" stroke-width="0.700"/>
<path d="M997.300 150.800 l3 -2.800 l5.400 5.800 l-3 2.800 z" fill="#fcd06c" stroke="#3b4453" stroke-width="0.600"/>
<path d="M1000.300 148 l2.300 -2.100 l1.300 1.300 l1.700 -1.700 l1.600 1.700 l-1.600 1.600 l1.500 1.500 l-2.400 2.200 z" fill="#ffffff"/>
<path d="M1152 69.800 H1167.400 L1174.200 76.300 V100.800 H1152 z" fill="#7cc4f8"/>
<path d="M1167.400 69.800 V76.300 H1174.200 z" fill="#bfe2fb"/>
<rect x="1135.300" y="83.100" width="25.100" height="18" fill="#6b7280" stroke="#c9c9c9" stroke-width="1"/>
<circle cx="1160.100" cy="100.900" r="9" fill="#6b7280" fill-opacity="0.85" stroke="#d0d0d0" stroke-width="1"/>
<path d="M1151.100 100.900 H1160.300 V91.900" fill="none" stroke="#aab0b8" stroke-width="0.900"/>
<rect x="1133.900" y="99.900" width="3.200" height="3.200" fill="#e6e6e6"/>
<rect x="1184.200" y="81.100" width="11.300" height="9.500" fill="#6b7280" stroke="#c4c4c4" stroke-width="0.900"/>
<circle cx="1195.800" cy="90" r="3.600" fill="#6b7280" fill-opacity="0.700" stroke="#c9c9c9" stroke-width="0.900"/>
<path d="M1195.800 86 v4 h-3.500" fill="none" stroke="#aab0b8" stroke-width="0.800"/>
<rect x="1183" y="89.400" width="2.400" height="2.400" fill="#e6e6e6"/>
<polygon points="1197.6,74.0 1198.6,76.8 1201.3,75.5 1200.0,78.2 1202.8,79.2 1200.0,80.2 1201.3,82.9 1198.6,81.6 1197.6,84.4 1196.6,81.6 1193.9,82.9 1195.2,80.2 1192.4,79.2 1195.2,78.2 1193.9,75.5 1196.6,76.8" fill="#fcd06c"/>
<rect x="1184.200" y="110.300" width="11.300" height="10.200" fill="#6b7280" stroke="#c4c4c4" stroke-width="0.900"/>
<circle cx="1197.900" cy="119.800" r="3.800" fill="#6b7280" fill-opacity="0.700" stroke="#c9c9c9" stroke-width="0.900"/>
<rect x="1183" y="119.300" width="2.400" height="2.400" fill="#e6e6e6"/>
<polygon points="1200.6,105.9 1198.8,107.5 1201.3,110.2 1203.0,108.5" fill="#e94d5a"/><polygon points="1198.8,107.5 1194.5,111.6 1197.0,114.2 1201.3,110.2" fill="#f3c969"/><polygon points="1194.5,111.6 1193.6,115.0 1197.0,114.2" fill="#e8e0d0"/><polygon points="1194.0,113.7 1193.6,115.0 1195.0,114.7" fill="#555"/>
<path d="M1183.300 137.800 H1189 L1200.500 148 L1192.800 155.600 L1183.300 145.500 z" fill="#d4d4d4"/>
<circle cx="1186.200" cy="140.600" r="1" fill="#3b4453"/>
<path d="M1188 143.800 l6.500 6.200 M1186 146 l5.500 5.200" stroke="#7a808a" stroke-width="0.800" fill="none"/>
<polygon points="1200.5,136.2 1198.8,137.9 1201.4,140.4 1203.1,138.6" fill="#e94d5a"/><polygon points="1198.8,137.9 1194.4,142.6 1197.0,145.1 1201.4,140.4" fill="#f3c969"/><polygon points="1194.4,142.6 1193.6,146.0 1197.0,145.1" fill="#e8e0d0"/><polygon points="1193.9,144.6 1193.6,146.0 1194.9,145.6" fill="#555"/>
<!-- ic_ribbon3 -->
<rect x="1248.300" y="71.900" width="25.600" height="35.100" fill="#dcdcdc"/>
<rect x="1251.600" y="74.800" width="17.200" height="12.600" fill="#7cc4f8" stroke="#5a626e" stroke-width="0.900"/>
<path d="M1253.200 93.800 H1267.800 M1253.200 100.500 H1265" stroke="#8a8f98" stroke-width="0.900" fill="none"/>
<rect x="1255.200" y="91.800" width="1.600" height="4" fill="#5a626e"/><rect x="1264.200" y="98.500" width="1.600" height="4" fill="#5a626e"/>
<path d="M1266.700 101.100 L1272.100 98.200 L1283.400 108.100 L1278 111.900 z" fill="#fcd06c" stroke="#3b4453" stroke-width="0.700"/>
<path d="M1272.300 98.200 L1278.300 94.400 L1281.300 96.600 L1284.500 93.700 L1287.500 96.800 L1284.800 100 L1287.400 103.200 L1283.500 107.800 z" fill="#f4f4f4" stroke="#3b4453" stroke-width="0.700"/>
<path d="M1316.9 83.9 L1327.10 83.90 A10.2 10.2 0 0 1 1322.00 92.73 z" fill="#ea5550"/>
<path d="M1316.9 83.9 L1322.00 92.73 A10.2 10.2 0 0 1 1311.80 92.73 z" fill="#9058ea"/>
<path d="M1316.9 83.9 L1311.80 92.73 A10.2 10.2 0 0 1 1306.70 83.90 z" fill="#1bb4cc"/>
<path d="M1316.9 83.9 L1306.70 83.90 A10.2 10.2 0 0 1 1311.80 75.07 z" fill="#3ecf86"/>
<path d="M1316.9 83.9 L1311.80 75.07 A10.2 10.2 0 0 1 1322.00 75.07 z" fill="#f7c33c"/>
<path d="M1316.9 83.9 L1322.00 75.07 A10.2 10.2 0 0 1 1327.10 83.90 z" fill="#f68b3a"/>
<g fill="#dcdcdc"><rect x="1306.800" y="105" width="20.400" height="0.900"/><rect x="1306.800" y="108.100" width="20.400" height="2.700"/><rect x="1306.800" y="112.900" width="20.400" height="3.800"/><rect x="1306.800" y="120.300" width="20.400" height="4.600"/></g>
<g stroke="#c2c4c8" stroke-width="1.100" fill="none"><path d="M1307 138.500 H1326.500" stroke-dasharray="1.500 1.500"/><path d="M1307 142.300 H1326.500" stroke-dasharray="4 1.200"/><path d="M1307 145.700 H1326.500"/><path d="M1307 149 H1326.500" stroke-dasharray="4 1.200"/><path d="M1307 152.400 H1326.500" stroke-dasharray="7 1 5 1 6 0"/></g>
<path d="M1338.800 114.500 H1419 M1338.800 146.500 H1419" stroke="#ececec" stroke-width="1" fill="none"/>
<g fill="none" stroke="#d8d8d8" stroke-width="1.400"><path d="M1516.800 78.600 H1512.100 V111.400 H1516.800 M1534.300 111.400 H1538.900 V93.400"/></g>
<rect x="1519.200" y="83.300" width="12.600" height="9.300" fill="#456a92" stroke="#6cc0f5" stroke-width="1"/>
<circle cx="1525.500" cy="102.500" r="6.300" fill="#6b7280" stroke="#c8c8c8" stroke-width="1"/>
<polygon points="1540.3,72.6 1541.7,78.2 1546.2,74.5 1544.0,79.9 1549.8,79.5 1544.9,82.6 1549.8,85.7 1544.0,85.3 1546.2,90.7 1541.7,87.0 1540.3,92.6 1538.9,87.0 1534.4,90.7 1536.6,85.3 1530.8,85.7 1535.7,82.6 1530.8,79.5 1536.6,79.9 1534.4,74.5 1538.9,78.2" fill="#fcd06c"/>
<rect x="1562.300" y="76.600" width="7.600" height="5.800" fill="#456a92" stroke="#6cc0f5" stroke-width="0.900"/>
<circle cx="1566" cy="87.600" r="3.700" fill="#6b7280" stroke="#b8bcc2" stroke-width="0.900"/>
<path d="M1572.300 74.400 H1576.200 V80.500 M1576.200 89.300 V93.300 H1572.300" fill="none" stroke="#d8d8d8" stroke-width="1.200"/>
<path d="M1573.200 81.800 l5.800 6 m0 -6 l-5.800 6" stroke="#f0455a" stroke-width="1.700" fill="none"/>
<path d="M1563.300 105.300 H1560.400 V122.300 H1563.300 M1569 105.300 H1572 V117.500" fill="none" stroke="#d8d8d8" stroke-width="1.200"/>
<rect x="1563.700" y="107.600" width="5.100" height="4.200" fill="#456a92" stroke="#6cc0f5" stroke-width="0.900"/>
<circle cx="1566.100" cy="116.900" r="2.700" fill="#6b7280" stroke="#b8bcc2" stroke-width="0.900"/>
<polygon points="1578.2,115.1 1576.4,116.7 1578.8,119.3 1580.6,117.7" fill="#e94d5a"/><polygon points="1576.4,116.7 1571.2,121.4 1573.6,124.1 1578.8,119.3" fill="#f3c969"/><polygon points="1571.2,121.4 1570.2,124.8 1573.6,124.1" fill="#e8e0d0"/><polygon points="1570.6,123.5 1570.2,124.8 1571.6,124.5" fill="#555"/>
<path d="M1564.700 136.400 H1561.700 V153.300 H1564.700 M1570.700 136.400 H1573.700 V143" fill="none" stroke="#c4c8ce" stroke-width="1.200"/>
<rect x="1565.300" y="138.700" width="5.300" height="4.300" fill="#3f7a5c" stroke="#5fd37e" stroke-width="0.900"/>
<circle cx="1568" cy="148.300" r="2.700" fill="#3f7a5c" stroke="#5fd37e" stroke-width="0.900"/>
<polygon points="1572.3,144.8 1572.3,154.2 1574.5,152.2 1576.2,155.8 1577.9,155.0 1576.3,151.6 1579.1,151.6" fill="#ffffff" stroke="#3b4453" stroke-width="0.500"/>
<rect x="1616" y="87.800" width="35.500" height="8" fill="#f2c76b"/>
<rect x="1618.5" y="87.800" width="1" height="2.2" fill="#8d7440"/>
<rect x="1621.4" y="87.800" width="1" height="3.3" fill="#8d7440"/>
<rect x="1624.4" y="87.800" width="1" height="2.2" fill="#8d7440"/>
<rect x="1627.3" y="87.800" width="1" height="3.3" fill="#8d7440"/>
<rect x="1630.3" y="87.800" width="1" height="2.2" fill="#8d7440"/>
<rect x="1633.3" y="87.800" width="1" height="3.3" fill="#8d7440"/>
<rect x="1636.2" y="87.800" width="1" height="2.2" fill="#8d7440"/>
<rect x="1639.2" y="87.800" width="1" height="3.3" fill="#8d7440"/>
<rect x="1642.1" y="87.800" width="1" height="2.2" fill="#8d7440"/>
<rect x="1645.1" y="87.800" width="1" height="3.3" fill="#8d7440"/>
<rect x="1648.1" y="87.800" width="1" height="2.2" fill="#8d7440"/>
<path d="M1692.300 74.200 l-5.500 6 h3.300 l-2.600 5 l7.200 -6.800 h-3.500 l3.700 -4.200 z" fill="#fcd06c"/>
<rect x="1689" y="82.200" width="12" height="11.700" fill="#f4f4f4"/>
<g stroke="#4b9fe0" stroke-width="1" fill="none"><path d="M1693.800 85.200 H1699.500 M1693.800 88.100 H1699.500 M1693.800 91 H1699.500"/></g>
<g fill="#4b9fe0"><rect x="1690.800" y="84.600" width="1.300" height="1.300"/><rect x="1690.800" y="87.500" width="1.300" height="1.300"/><rect x="1690.800" y="90.400" width="1.300" height="1.300"/></g>
<polygon points="1681.4,80.0 1681.4,91.0 1684.0,88.6 1685.9,92.8 1687.9,91.9 1686.0,87.9 1689.4,87.9" fill="#ffffff" stroke="#3b4453" stroke-width="0.500"/>
<rect x="1681.600" y="105.400" width="17" height="17.300" fill="#2f6b4e" stroke="#4fd070" stroke-width="0.900" stroke-dasharray="2 1.200"/>
<rect x="1687.300" y="107.100" width="9.900" height="9.800" fill="#6fcf97"/>
<rect x="1683.300" y="110.900" width="10" height="10.400" fill="#6fcf97" stroke="#2f5f49" stroke-width="0.800"/>
<polygon points="1693.2,113.8 1693.2,123.8 1695.6,121.6 1697.3,125.4 1699.1,124.5 1697.4,120.9 1700.4,120.9" fill="#ffffff" stroke="#3b4453" stroke-width="0.500"/>
<rect x="1683.300" y="136.100" width="14.600" height="19.900" fill="#d8d8d8"/>
<rect x="1686.200" y="138.800" width="9" height="3.300" fill="#686c74"/>
<rect x="1686.2" y="144.6" width="2.200" height="2" fill="#7a7e86"/>
<rect x="1686.2" y="148.0" width="2.200" height="2" fill="#7a7e86"/>
<rect x="1686.2" y="151.4" width="2.200" height="2" fill="#7a7e86"/>
<rect x="1689.6" y="144.6" width="2.200" height="2" fill="#7a7e86"/>
<rect x="1689.6" y="148.0" width="2.200" height="2" fill="#7a7e86"/>
<rect x="1689.6" y="151.4" width="2.200" height="2" fill="#7a7e86"/>
<rect x="1693.0" y="144.6" width="2.200" height="2" fill="#7a7e86"/>
<rect x="1693.0" y="148.0" width="2.200" height="2" fill="#7a7e86"/>
<rect x="1693.0" y="151.4" width="2.200" height="2" fill="#7a7e86"/>
<rect x="1727.700" y="76.900" width="28.200" height="31.300" fill="#dfae72"/>
<path d="M1734.800 78.300 v-2.200 q0 -0.800 0.800 -0.800 h2.700 q0.300 -2.200 3.300 -2.200 q3 0 3.300 2.200 h2.700 q0.800 0 0.800 0.800 v2.200 z" fill="#f4f4f4"/>
<path d="M1736.900 84.800 H1751.500 L1760 93.300 V112.900 H1736.900 z" fill="#dcdcdc" stroke="#3b4453" stroke-width="1"/>
<path d="M1751.500 84.800 V93.300 H1760 z" fill="#f2f2f2"/>
<rect x="1779.900" y="73.800" width="15.200" height="17.500" fill="#d4d4d4"/>
<path d="M1782.300 77 H1792.500 M1782.300 82.200 H1788 M1782.300 87.400 H1788" stroke="#9a9da3" stroke-width="0.900" fill="none"/>
<path d="M1788 79.600 l2.400 0.500 l5.800 9.500 l-2.200 1.400 z M1800.400 81 l-2.300 0.300 l-6.900 9 l2 1.500 z" fill="#ffffff" stroke="#3b4453" stroke-width="0.500"/>
<g fill="none" stroke="#ffffff" stroke-width="1.400"><circle cx="1791.100" cy="91.900" r="2.100"/><circle cx="1797.900" cy="91.900" r="2.100"/></g>
<rect x="1782" y="105.100" width="8.600" height="16.400" fill="#cfcfcf"/>
<path d="M1786.100 107.700 H1793.900 L1798.100 111.900 V125.100 H1786.100 z" fill="#d8d8d8" stroke="#3b4453" stroke-width="0.900"/>
<path d="M1793.900 107.700 V111.900 H1798.100 z" fill="#f4f4f4"/>
<path d="M1844 76.900 H1861.200 V89.800 H1883.900 V107 H1844 z" fill="#dcdcdc"/>
<!-- ic_status -->
<g stroke="#e2e2e2" stroke-width="1.200" fill="none"><path d="M1307.400 987.100 V1006 M1312.600 987.100 V1006 M1317.700 987.100 V1006 M1303 991 H1322.200 M1303 996.200 H1322.200 M1303 1001.200 H1322.200"/></g>
<rect x="1335.2" y="989.2" width="2.600" height="2.600" fill="#d8d8d8"/>
<rect x="1335.2" y="995.1" width="2.600" height="2.600" fill="#d8d8d8"/>
<rect x="1335.2" y="1001.0" width="2.600" height="2.600" fill="#d8d8d8"/>
<rect x="1341.1" y="989.2" width="2.600" height="2.600" fill="#d8d8d8"/>
<rect x="1341.1" y="995.1" width="2.600" height="2.600" fill="#d8d8d8"/>
<rect x="1341.1" y="1001.0" width="2.600" height="2.600" fill="#d8d8d8"/>
<rect x="1347.1" y="989.2" width="2.600" height="2.600" fill="#d8d8d8"/>
<rect x="1347.1" y="995.1" width="2.600" height="2.600" fill="#d8d8d8"/>
<rect x="1347.1" y="1001.0" width="2.600" height="2.600" fill="#d8d8d8"/>
<path d="M1362.8 993.6 h10.0 l-5.00 5.4 z" fill="#dcdcdc"/>
<path d="M1386.500 987.100 V1006.500 H1406" stroke="#e2e2e2" stroke-width="1.300" fill="none"/>
<path d="M1386.500 1000.900 H1392.400 V1006.500" stroke="#aeb2b8" stroke-width="1.100" fill="none"/>
<circle cx="1424" cy="996.900" r="7.900" fill="none" stroke="#d0d0d0" stroke-width="1.200"/>
<path d="M1436 997.400 H1423.500 L1432.800 988.300" stroke="#d0d0d0" stroke-width="1.200" fill="none"/>
<path d="M1445.9 993.6 h10.0 l-5.00 5.4 z" fill="#dcdcdc"/>
<line x1="1468.300" y1="988.300" x2="1483.400" y2="1003.600" stroke="#d85a5f" stroke-width="1.200"/>
<line x1="1476.400" y1="987" x2="1476.400" y2="1005" stroke="#4fd36a" stroke-width="1.300"/>
<rect x="1474.700" y="994.300" width="3.400" height="3.400" fill="#3b4453" stroke="#f0f0f0" stroke-width="0.900"/>
<path d="M1495.9 993.6 h10.0 l-5.00 5.4 z" fill="#dcdcdc"/>
<path d="M1517.300 1003.800 H1536.800" stroke="#aeb2b8" stroke-width="2" fill="none"/>
<path d="M1517.800 1003.300 L1531.900 989" stroke="#d0d0d0" stroke-width="1.200" fill="none"/>
<rect x="1522.600" y="995.100" width="3.600" height="3.600" fill="#e6e6e6"/>
<rect x="1549.600" y="989.400" width="17" height="17" fill="none" stroke="#ffffff" stroke-width="1.300"/>
<rect x="1547" y="987.300" width="5.600" height="5.200" fill="#6091c5" stroke="#ffffff" stroke-width="1"/>
<path d="M1577.0 993.6 h10.0 l-5.00 5.4 z" fill="#dcdcdc"/>
<polygon points="1608.40,986.90 1611.70,995.60 1610.70,996.20 1610.40,997.50 1613.20,999.50 1616.90,1006.80 1611.60,1004.10 1608.40,1002.00 1605.20,1004.10 1599.90,1006.80 1603.60,999.50 1606.40,997.50 1606.10,996.20 1605.10,995.60" fill="#ffffff"/>
<circle cx="1616.100" cy="991.400" r="3.500" fill="none" stroke="#ffffff" stroke-width="1.100"/>
<polygon points="1638.60,986.90 1641.90,995.60 1640.90,996.20 1640.60,997.50 1643.40,999.50 1647.10,1006.80 1641.80,1004.10 1638.60,1002.00 1635.40,1004.10 1630.10,1006.80 1633.80,999.50 1636.60,997.50 1636.30,996.20 1635.30,995.60" fill="#dcdcdc"/>
<polygon points="1647.800,987.200 1642.700,991.500 1645.500,992.500 1643.500,996.600 1649,992.200 1646.700,991.200" fill="#dcdcdc"/>
<polygon points="1669.50,986.90 1672.80,995.60 1671.80,996.20 1671.50,997.50 1674.30,999.50 1678.00,1006.80 1672.70,1004.10 1669.50,1002.00 1666.30,1004.10 1661.00,1006.80 1664.70,999.50 1667.50,997.50 1667.20,996.20 1666.20,995.60" fill="#dcdcdc"/>
<path d="M1712.0 993.6 h10.0 l-5.00 5.4 z" fill="#dcdcdc"/>
<polygon points="1752.24,995.38 1755.28,995.36 1755.28,998.44 1752.24,998.42 1751.22,1000.87 1753.39,1003.01 1751.21,1005.19 1749.07,1003.02 1746.62,1004.04 1746.64,1007.08 1743.56,1007.08 1743.58,1004.04 1741.13,1003.02 1738.99,1005.19 1736.81,1003.01 1738.98,1000.87 1737.96,998.42 1734.92,998.44 1734.92,995.36 1737.96,995.38 1738.98,992.93 1736.81,990.79 1738.99,988.61 1741.13,990.78 1743.58,989.76 1743.56,986.72 1746.64,986.72 1746.62,989.76 1749.07,990.78 1751.21,988.61 1753.39,990.79 1751.22,992.93" fill="#dcdcdc"/>
<circle cx="1745.1" cy="996.9" r="7.500" fill="#dcdcdc"/>
<circle cx="1745.1" cy="996.9" r="3.300" fill="#3b4453"/>
<path d="M1764.9 993.6 h10.0 l-5.00 5.4 z" fill="#dcdcdc"/>
<path d="M1786 996.400 H1805.100 M1795.500 987.200 V1005.900" stroke="#dcdcdc" stroke-width="3" fill="none"/>
<g fill="none" stroke="#dcdcdc" stroke-width="1.200"><rect x="1819.300" y="987.500" width="7.500" height="7.300"/><circle cx="1834.400" cy="995.400" r="4.300"/><path d="M1826.700 999.300 L1822.300 1006.600 H1831.300 z"/></g>
<rect x="1859.300" y="989.400" width="19.500" height="14.100" fill="none" stroke="#dcdcdc" stroke-width="1.200"/>
<path d="M1871.500 994.500 L1876.300 991.300 M1866 998.600 L1861.500 1001.600" stroke="#dcdcdc" stroke-width="1.100" fill="none"/>
<path d="M1872.300 990.800 h4.600 v4.600 z M1861 1002.300 v-4.700 l4.700 4.700 z" fill="#dcdcdc"/>
<path d="M1889 989.100 H1909 M1889 996.500 H1909 M1889 1003.900 H1909" stroke="#e6e6e6" stroke-width="2.400" fill="none"/>
</svg>
<span class="t" style="left:414.5px;top:12px;font-size:15.4px;color:#6cc0f5;letter-spacing:-1.017px;">Share</span>
<span class="t" style="left:687.5px;top:11px;font-size:15.4px;color:#e8e8e8;letter-spacing:-0.306px;">Autodesk AutoCAD 2023</span>
<span class="t" style="left:867.5px;top:11px;font-size:15.4px;color:#e8e8e8;letter-spacing:-0.133px;">Drawing1.dwg</span>
<span class="t" style="left:1214.0px;top:12px;font-size:13.5px;color:#c4c6ca;font-style:italic;letter-spacing:-0.174px;">Type a keyword or phrase</span>
<span class="t" style="left:1496.5px;top:12px;font-size:15.4px;color:#e8e8e8;letter-spacing:-0.490px;">evafrias2020</span>
<span class="t" style="left:23.5px;top:45px;font-size:15.4px;color:#ffffff;letter-spacing:-0.304px;">Home</span>
<span class="t" style="left:88.5px;top:45px;font-size:15.4px;color:#d4d6da;letter-spacing:-0.455px;">Insert</span>
<span class="t" style="left:148.5px;top:45px;font-size:15.4px;color:#d4d6da;letter-spacing:-0.083px;">Annotate</span>
<span class="t" style="left:234.5px;top:45px;font-size:15.4px;color:#d4d6da;letter-spacing:-0.464px;">Parametric</span>
<span class="t" style="left:328.5px;top:45px;font-size:15.4px;color:#d4d6da;letter-spacing:-0.312px;">View</span>
<span class="t" style="left:384.5px;top:45px;font-size:15.4px;color:#d4d6da;letter-spacing:-0.295px;">Manage</span>
<span class="t" style="left:462.5px;top:45px;font-size:15.4px;color:#d4d6da;letter-spacing:-0.037px;">Output</span>
<span class="t" style="left:532.5px;top:45px;font-size:15.4px;color:#d4d6da;letter-spacing:-0.029px;">Add-ins</span>
<span class="t" style="left:608.5px;top:45px;font-size:15.4px;color:#d4d6da;letter-spacing:-0.068px;">Collaborate</span>
<span class="t" style="left:710.5px;top:45px;font-size:15.4px;color:#d4d6da;letter-spacing:-0.603px;">Express Tools</span>
<span class="t" style="left:822.5px;top:45px;font-size:15.4px;color:#d4d6da;letter-spacing:-0.329px;">Featured Apps</span>
<span class="t" style="left:21.9px;top:120px;font-size:15.4px;color:#e8e8e8;letter-spacing:-0.717px;">Line</span>
<span class="t" style="left:62.9px;top:120px;font-size:15.4px;color:#e8e8e8;letter-spacing:-0.441px;">Polyline</span>
<span class="t" style="left:132.0px;top:121px;font-size:15.4px;color:#e8e8e8;letter-spacing:-0.517px;">Circle</span>
<span class="t" style="left:195.8px;top:121px;font-size:15.4px;color:#e8e8e8;letter-spacing:-0.478px;">Arc</span>
<span class="t" style="left:122.3px;top:170px;font-size:15.4px;color:#e8e8e8;letter-spacing:-0.492px;">Draw</span>
<span class="t" style="left:319.9px;top:78px;font-size:15.4px;color:#e8e8e8;letter-spacing:-0.412px;">Move</span>
<span class="t" style="left:320.8px;top:109px;font-size:15.4px;color:#e8e8e8;letter-spacing:-0.696px;">Copy</span>
<span class="t" style="left:320.8px;top:140px;font-size:15.4px;color:#e8e8e8;letter-spacing:-0.472px;">Stretch</span>
<span class="t" style="left:412.0px;top:78px;font-size:15.4px;color:#e8e8e8;letter-spacing:-0.429px;">Rotate</span>
<span class="t" style="left:411.1px;top:109px;font-size:15.4px;color:#e8e8e8;letter-spacing:0.057px;">Mirror</span>
<span class="t" style="left:411.1px;top:140px;font-size:15.4px;color:#e8e8e8;letter-spacing:-0.978px;">Scale</span>
<span class="t" style="left:498.9px;top:78px;font-size:15.4px;color:#e8e8e8;letter-spacing:-0.515px;">Trim</span>
<span class="t" style="left:500.1px;top:109px;font-size:15.4px;color:#e8e8e8;letter-spacing:-0.200px;">Fillet</span>
<span class="t" style="left:498.9px;top:140px;font-size:15.4px;color:#e8e8e8;letter-spacing:-0.529px;">Array</span>
<span class="t" style="left:412.0px;top:170px;font-size:15.4px;color:#e8e8e8;letter-spacing:0.210px;">Modify</span>
<span class="t" style="left:614.8px;top:67px;font-size:50px;color:#dcdcdc;">A</span>
<span class="t" style="left:619.9px;top:120px;font-size:15.4px;color:#e8e8e8;letter-spacing:-0.753px;">Text</span>
<span class="t" style="left:662.2px;top:120px;font-size:15.4px;color:#e8e8e8;letter-spacing:-0.308px;">Dimension</span>
<span class="t" style="left:648.1px;top:170px;font-size:15.4px;color:#e8e8e8;letter-spacing:-0.043px;">Annotation</span>
<span class="t" style="left:807.9px;top:120px;font-size:15.4px;color:#e8e8e8;letter-spacing:-0.889px;">Layer</span>
<span class="t" style="left:792.2px;top:140px;font-size:15.4px;color:#e8e8e8;letter-spacing:-0.395px;">Properties</span>
<span class="t" style="left:966.8px;top:78px;font-size:15.4px;color:#e8e8e8;">0</span>
<span class="t" style="left:928.1px;top:170px;font-size:15.4px;color:#e8e8e8;letter-spacing:-1.019px;">Layers</span>
<span class="t" style="left:1136.1px;top:119px;font-size:15.4px;color:#e8e8e8;letter-spacing:-0.545px;">Insert</span>
<span class="t" style="left:1150.2px;top:170px;font-size:15.4px;color:#e8e8e8;letter-spacing:-0.476px;">Block</span>
<span class="t" style="left:1246.0px;top:120px;font-size:15.4px;color:#e8e8e8;letter-spacing:-0.338px;">Match</span>
<span class="t" style="left:1232.9px;top:140px;font-size:15.4px;color:#e8e8e8;letter-spacing:-0.374px;">Properties</span>
<span class="t" style="left:1364.1px;top:78px;font-size:15.4px;color:#e8e8e8;letter-spacing:-0.934px;">ByLayer</span>
<span class="t" style="left:1421.2px;top:109px;font-size:15.4px;color:#e8e8e8;letter-spacing:-0.934px;">ByLayer</span>
<span class="t" style="left:1421.2px;top:140px;font-size:15.4px;color:#e8e8e8;letter-spacing:-0.934px;">ByLayer</span>
<span class="t" style="left:1314.8px;top:170px;font-size:15.4px;color:#e8e8e8;letter-spacing:-0.385px;">Properties</span>
<span class="t" style="left:1510.0px;top:120px;font-size:15.4px;color:#e8e8e8;letter-spacing:-0.551px;">Group</span>
<span class="t" style="left:1515.1px;top:170px;font-size:15.4px;color:#e8e8e8;letter-spacing:-0.724px;">Groups</span>
<span class="t" style="left:1605.9px;top:121px;font-size:15.4px;color:#e8e8e8;letter-spacing:-0.675px;">Measure</span>
<span class="t" style="left:1616.0px;top:170px;font-size:15.4px;color:#e8e8e8;">Utilities</span>
<span class="t" style="left:1727.2px;top:121px;font-size:15.4px;color:#e8e8e8;letter-spacing:-1.200px;">Paste</span>
<span class="t" style="left:1733.7px;top:170px;font-size:15.4px;color:#e8e8e8;letter-spacing:-0.081px;">Clipboard</span>
<span class="t" style="left:1848.2px;top:121px;font-size:15.4px;color:#e8e8e8;letter-spacing:-1.200px;">Base</span>
<span class="t" style="left:1829.7px;top:170px;font-size:15.4px;color:#e8e8e8;letter-spacing:-0.370px;">View</span>
<span class="t" style="left:38.6px;top:200px;font-size:15.4px;color:#e8e8e8;letter-spacing:-0.381px;">Start</span>
<span class="t" style="left:99.8px;top:200px;font-size:15.4px;color:#e8e8e8;letter-spacing:-0.431px;">rd_a.dwt</span>
<span class="t" style="left:201.1px;top:200px;font-size:15.4px;color:#ffffff;font-weight:bold;letter-spacing:-0.161px;">Drawing1*</span>
<span class="t" style="left:11.6px;top:236px;font-size:14.5px;color:#e0e0e0;letter-spacing:1.147px;">[−]</span>
<span class="t" style="left:32.7px;top:236px;font-size:14.5px;color:#e0e0e0;letter-spacing:0.143px;">[Custom View][2D Wireframe]</span>
<span class="t" style="left:39.0px;top:989px;font-size:15.4px;color:#ffffff;font-weight:bold;letter-spacing:-0.326px;">Model</span>
<span class="t" style="left:112.5px;top:989px;font-size:15.4px;color:#e8e8e8;letter-spacing:-1.018px;">A3RD</span>
<span class="t" style="left:1240.5px;top:991px;font-size:15.4px;color:#e8e8e8;letter-spacing:-1.097px;">MODEL</span>
<span class="t" style="left:1689.9px;top:993px;font-size:14px;color:#e8e8e8;font-family:'NanumGothic','Liberation Sans',sans-serif;font-weight:bold;letter-spacing:-0.8px;">1:1</span>
<span class="t" style="left:556.0px;top:950px;font-size:14px;color:#6a6d73;font-family:'Liberation Mono','DejaVu Sans Mono',monospace;font-style:italic;letter-spacing:0.583px;">Type a command</span>
<span class="t" style="left:17.1px;top:11px;font-size:15.4px;color:#ffffff;font-weight:bold;-webkit-text-stroke:0.5px #fff;">A</span>
<span class="t" style="left:36.3px;top:13px;font-size:8.3px;color:#ffffff;font-weight:bold;letter-spacing:-0.154px;">CAD</span>
<span class="t" style="left:1714.3px;top:11px;font-size:16px;color:#9a9da3;font-weight:bold;">?</span>
<span class="t" style="left:1820.4px;top:282px;font-size:20px;color:#b8b8b8;font-weight:bold;transform:scaleX(1.12);transform-origin:0 0;">N</span>
<span class="t" style="left:1757.7px;top:338px;font-size:22.6px;color:#b8b8b8;font-weight:bold;">W</span>
<span class="t" style="left:1880.5px;top:337px;font-size:21.6px;color:#b8b8b8;font-weight:bold;">E</span>
<span class="t" style="left:1821.0px;top:397px;font-size:24px;color:#b8b8b8;font-weight:bold;">S</span>
<span class="t" style="left:1816.5px;top:331px;font-size:14.5px;color:#4b505c;font-weight:bold;transform:scaleX(0.78);transform-origin:0 0;-webkit-text-stroke:0.35px #4b505c;letter-spacing:1.500px;">TOP</span>
<span class="t" style="left:1803.9px;top:438px;font-size:13.5px;color:#6a6e7e;letter-spacing:-0.760px;">WCS</span>
</body></html>
